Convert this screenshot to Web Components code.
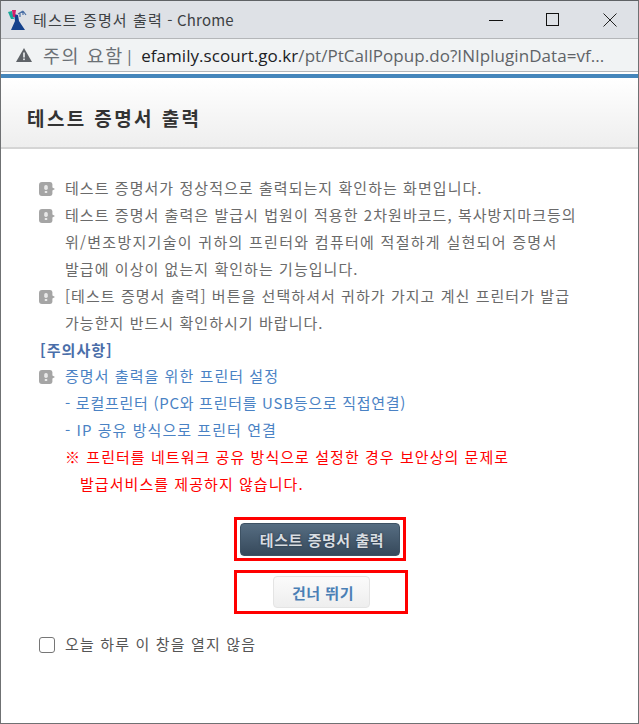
<!DOCTYPE html>
<html lang="ko">
<head>
<meta charset="utf-8">
<title>테스트 증명서 출력</title>
<style>
  html, body { margin: 0; padding: 0; height: 100%; background: #fff; }
  body { font-family: "Noto Sans CJK KR", "Liberation Sans", sans-serif; overflow: hidden; }
</style>
</head>
<body>

<popup-window>
  <chrome-titlebar title-text="테스트 증명서 출력" suffix=" - Chrome"></chrome-titlebar>
  <chrome-urlbar host="efamily.scourt.go.kr" path="/pt/PtCallPopup.do?INIpluginData=vf..."></chrome-urlbar>
  <popup-heading>테스트 증명서 출력</popup-heading>
  <popup-body>
    <info-line bullet>테스트 증명서가 정상적으로 출력되는지 확인하는 화면입니다.</info-line>
    <info-line bullet>테스트 증명서 출력은 발급시 법원이 적용한 2차원바코드, 복사방지마크등의</info-line>
    <info-line style="letter-spacing:1.28px">위/변조방지기술이 귀하의 프린터와 컴퓨터에 적절하게 실현되어 증명서</info-line>
    <info-line>발급에 이상이 없는지 확인하는 기능입니다.</info-line>
    <info-line bullet>[테스트 증명서 출력] 버튼을 선택하셔서 귀하가 가지고 계신 프린터가 발급</info-line>
    <info-line>가능한지 반드시 확인하시기 바랍니다.</info-line>
    <info-line tone="heading">[주의사항]</info-line>
    <info-line bullet tone="blue">증명서 출력을 위한 프린터 설정</info-line>
    <info-line tone="blue" style="letter-spacing:.72px">- 로컬프린터 (PC와 프린터를 USB등으로 직접연결)</info-line>
    <info-line tone="blue">- IP 공유 방식으로 프린터 연결</info-line>
    <info-line tone="red">※ 프린터를 네트워크 공유 방식으로 설정한 경우 보안상의 문제로</info-line>
    <info-line tone="red" indent>발급서비스를 제공하지 않습니다.</info-line>
    <action-buttons></action-buttons>
    <skip-check>오늘 하루 이 창을 열지 않음</skip-check>
  </popup-body>
</popup-window>

<script>
// outer frame of the popup window
class PopupWindow extends HTMLElement {
  constructor() {
    super();
    this.attachShadow({ mode: "open" });
    this.shadowRoot.innerHTML = `
      <style>
        :host {
          display: flex;
          flex-direction: column;
          box-sizing: border-box;
          width: 639px;
          height: 724px;
          border: 1px solid #6f7173;
          border-top-color: #5f6265;
          background: #fff;
          overflow: hidden;
        }
      </style>
      <slot></slot>
    `;
  }
}
customElements.define("popup-window", PopupWindow);

class ChromeTitlebar extends HTMLElement {
  constructor() {
    super();
    this.attachShadow({ mode: "open" });
    this.shadowRoot.innerHTML = `
      <style>
        :host {
          display: flex;
          align-items: center;
          height: 37px;
          background: #dee1e6;
          font: 15px "Noto Sans CJK KR", sans-serif;
          color: #3c4043;
          flex: none;
        }
        .logo { width: 20px; height: 22px; margin-left: 6px; flex: none; }
        .name { margin-left: 6px; flex: 1; white-space: nowrap; }
        .ko { letter-spacing: 1.1px; }
        .suffix { letter-spacing: .2px; }
        svg.ctl { flex: none; }
        .min { margin-right: 43px; }
        .max { margin-right: 43px; }
        .close { margin-right: 21px; }
      </style>
      <svg class="logo" viewBox="0 0 20 22">
        <path d="M7 5 L11 6 L12 12 L18 21 L4 21 L8 12 Z" fill="#14418c"/>
        <path d="M1 3 L5 2 L7 10 L4 10 Z" fill="#19a89a"/>
        <path d="M5 1 L9 1 L8 8 L6 8 Z" fill="#d21f6b"/>
        <path d="M11 5 L16 2 M16 2 L19 6 M13 4 L13 8 M16 2 L16 6" fill="none" stroke="#4a6fa5" stroke-width="1.2"/>
      </svg>
      <span class="name"><span class="ko"></span><span class="suffix"></span></span>
      <svg class="ctl min" width="14" height="14" viewBox="0 0 14 14"><path d="M0 7.5 H14" stroke="#111" stroke-width="1"/></svg>
      <svg class="ctl max" width="14" height="14" viewBox="0 0 14 14"><rect x=".5" y=".5" width="12" height="12" fill="none" stroke="#111"/></svg>
      <svg class="ctl close" width="14" height="14" viewBox="0 0 14 14"><path d="M.5 .5 L13.5 13.5 M13.5 .5 L.5 13.5" stroke="#222" stroke-width="1"/></svg>
    `;
    this.shadowRoot.querySelector(".ko").textContent = this.getAttribute("title-text");
    this.shadowRoot.querySelector(".suffix").textContent = this.getAttribute("suffix");
  }
}
customElements.define("chrome-titlebar", ChromeTitlebar);

class ChromeUrlbar extends HTMLElement {
  constructor() {
    super();
    this.attachShadow({ mode: "open" });
    this.shadowRoot.innerHTML = `
      <style>
        :host {
          display: flex;
          align-items: center;
          flex: none;
          box-sizing: border-box;
          height: 34px;
          background: #f1f3f4;
          border-top: 1px solid #b4b6b9;
          border-bottom: 1px solid #b4b6b9;
          font: 17px "Open Sans", sans-serif;
          letter-spacing: .05px;
          white-space: nowrap;
        }
        svg { margin-left: 15px; flex: none; }
        .warn { margin-left: 11px; color: #6b7075; font: 18.5px "Noto Sans CJK KR", sans-serif; letter-spacing: 1.5px; }
        .sep { margin-left: 1px; color: #6b7075; }
        .host { margin-left: 7px; color: #202124; }
        .path { color: #5f6368; }
      </style>
      <svg width="16" height="14" viewBox="0 0 16 14">
        <path d="M8 0 L16 14 H0 Z" fill="#5f6368"/>
        <rect x="7.2" y="4.5" width="1.6" height="5" fill="#f1f3f4"/>
        <rect x="7.2" y="10.5" width="1.6" height="1.6" fill="#f1f3f4"/>
      </svg>
      <span class="warn">주의 요함</span>
      <span class="sep">|</span>
      <span class="host"></span><span class="path"></span>
    `;
    this.shadowRoot.querySelector(".host").textContent = this.getAttribute("host");
    this.shadowRoot.querySelector(".path").textContent = this.getAttribute("path");
  }
}
customElements.define("chrome-urlbar", ChromeUrlbar);

class PopupHeading extends HTMLElement {
  constructor() {
    super();
    this.attachShadow({ mode: "open" });
    this.shadowRoot.innerHTML = `
      <style>
        :host {
          display: block;
          flex: none;
          box-sizing: border-box;
          height: 75px;
          margin-top: 2px;
          padding: 27px 0 0 26px;
          border-top: 4px solid #4586bb;
          border-bottom: 2px solid #d5d5d5;
          background: linear-gradient(#ffffff, #eeeeee);
          font: bold 19px/26px "Noto Sans CJK KR", sans-serif;
          letter-spacing: 2.4px;
          color: #333;
        }
      </style>
      <slot></slot>
    `;
  }
}
customElements.define("popup-heading", PopupHeading);

class PopupBody extends HTMLElement {
  constructor() {
    super();
    this.attachShadow({ mode: "open" });
    this.shadowRoot.innerHTML = `
      <style>
        :host {
          display: flex;
          flex-direction: column;
          flex: 1;
          padding: 25px 0 0 38px;
        }
      </style>
      <slot></slot>
    `;
  }
}
customElements.define("popup-body", PopupBody);

// one text row, with optional bullet and colour tone
class InfoLine extends HTMLElement {
  constructor() {
    super();
    this.attachShadow({ mode: "open" });
    this.shadowRoot.innerHTML = `
      <style>
        :host {
          display: flex;
          align-items: center;
          height: 27px;
          padding-left: 26px;
          font: 15px/27px "Noto Sans CJK KR", sans-serif;
          letter-spacing: 1.05px;
          color: #6a6a6a;
          white-space: nowrap;
        }
        :host([bullet]) { padding-left: 0; }
        :host([tone="blue"]) { color: #4a82c4; }
        :host([tone="red"]) { color: #f00; }
        :host([tone="heading"]) { color: #4a6ea9; font-weight: bold; padding-left: 1px; height: 26px; }
        :host([indent]) { padding-left: 41px; }
        svg { flex: none; margin: 2px 10px 0 0; display: none; }
        :host([bullet]) svg { display: block; }
      </style>
      <svg width="16" height="14" viewBox="0 0 16 14">
        <path d="M3 0 H11 Q13 0 13.4 2 V5.5 L16 7 L13.4 8.5 V12 Q13 14 11 14 H3 Q0 14 0 11 V3 Q0 0 3 0 Z" fill="#a5a5a5"/>
        <rect x="5.2" y="3" width="3.6" height="5" rx="1.7" fill="#e8e8e8"/>
        <rect x="5.8" y="9" width="2.4" height="2" fill="#e8e8e8"/>
      </svg>
      <slot></slot>
    `;
  }
}
customElements.define("info-line", InfoLine);

class ActionButtons extends HTMLElement {
  constructor() {
    super();
    this.attachShadow({ mode: "open" });
    this.shadowRoot.innerHTML = `
      <style>
        :host {
          display: flex;
          flex-direction: column;
          align-items: flex-start;
          margin: 20px 0 0 195px;
          font-family: "Noto Sans CJK KR", sans-serif;
        }
        .box { display: flex; align-items: center; justify-content: center; box-sizing: border-box; border: 3px solid #f00; }
        .box1 { width: 172px; height: 44px; }
        .box2 { width: 174px; height: 44px; margin-top: 9px; }
        button { box-sizing: border-box; font: bold 15px "Noto Sans CJK KR", sans-serif; letter-spacing: .55px; padding: 0 0 0 4px; }
        .print {
          width: 160px; height: 33px;
          border: 1px solid #3e5264; border-radius: 4px;
          background: linear-gradient(#566d82, #36495b);
          color: #d8dde2;
          text-shadow: 0 0 2px #1e2b38;
        }
        .skip {
          width: 97px; height: 32px;
          border: 1px solid #e4e4e4; border-radius: 4px;
          background: linear-gradient(#fbfbfb, #eeeeee);
          color: #4a7fb5;
        }
      </style>
      <div class="box box1"><button class="print">테스트 증명서 출력</button></div>
      <div class="box box2"><button class="skip">건너 뛰기</button></div>
    `;
  }
}
customElements.define("action-buttons", ActionButtons);

class SkipCheck extends HTMLElement {
  constructor() {
    super();
    this.attachShadow({ mode: "open" });
    this.shadowRoot.innerHTML = `
      <style>
        :host {
          display: flex;
          align-items: center;
          gap: 10px;
          margin-top: 16px;
          height: 26px;
          font: 15px "Noto Sans CJK KR", sans-serif;
          letter-spacing: 1.15px;
          color: #555;
        }
        .box {
          width: 16px; height: 16px; box-sizing: border-box;
          border: 1px solid #767676; border-radius: 3px; background: #fff;
          margin-top: 4px;
        }
      </style>
      <span class="box"></span>
      <slot></slot>
    `;
  }
}
customElements.define("skip-check", SkipCheck);
</script>
</body>
</html>
